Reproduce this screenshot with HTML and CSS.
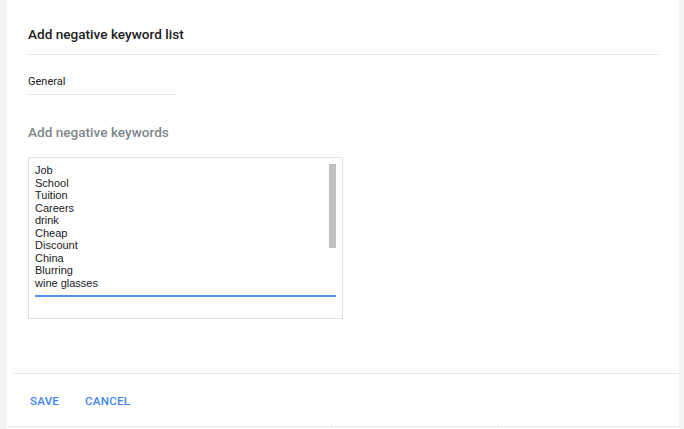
FILE: index.html
```html
<!DOCTYPE html>
<html>
<head>
<meta charset="utf-8">
<link rel="stylesheet" href="styles.css">
</head>
<body>
<div class="page">
  <div class="card">
    <div class="card-body">
      <div class="header">
        <h1 class="title">Add negative keyword list</h1>
      </div>
      <div class="name-field">General</div>
      <div class="label">Add negative keywords</div>
      <div class="textbox">
        <div class="lines">
          <div>Job</div>
          <div>School</div>
          <div>Tuition</div>
          <div>Careers</div>
          <div>drink</div>
          <div>Cheap</div>
          <div>Discount</div>
          <div>China</div>
          <div>Blurring</div>
          <div>wine glasses</div>
        </div>
        <div class="focus-line"></div>
        <div class="scroll-thumb"></div>
      </div>
    </div>
    <div class="footer">
      <button class="btn">SAVE</button>
      <button class="btn">CANCEL</button>
    </div>
  </div>
  <div class="below">
    <div class="cell"></div>
    <div class="cell"></div>
    <div class="cell"></div>
  </div>
</div>
</body>
</html>
```

FILE: styles.css
```css
html, body {
  margin: 0;
  padding: 0;
  background: #f1f3f4;
  font-family: Roboto, "Liberation Sans", Arial, sans-serif;
  color: #202124;
}

.page {
  width: 672px;
  margin-left: 7px;
  height: 429px;
  background: #ffffff;
}

.card {
  height: 426px;
  border-bottom: 1px solid #e6e8ea;
  display: flex;
  flex-direction: column;
}

.card-body {
  padding: 0 20px 0 21px;
}

.header {
  padding-top: 26px;
  height: 28px;
  border-bottom: 1px solid #e4e6e8;
}

.title {
  margin: 0;
  font-size: 13.6px;
  line-height: 17px;
  font-weight: 500;
  color: #202124;
}

.name-field {
  width: 148px;
  margin-top: 20px;
  font-size: 11px;
  line-height: 13px;
  padding-bottom: 6px;
  border-bottom: 1px solid #e4e6e8;
  color: #202124;
}

.label {
  margin-top: 29px;
  font-size: 13.6px;
  line-height: 17px;
  font-weight: 500;
  color: #80868b;
}

.textbox {
  position: relative;
  margin-top: 16px;
  width: 313px;
  height: 160px;
  border: 1px solid #dfe1e3;
  box-sizing: content-box;
}

.lines {
  padding: 6px 0 0 6px;
  font-family: "Liberation Sans", Arial, sans-serif;
  font-size: 11px;
  line-height: 12.5px;
  color: #202124;
}

.focus-line {
  margin: 6px 6px 0 6px;
  height: 2px;
  background: #5b8def;
}

.scroll-thumb {
  position: absolute;
  left: 300px;
  top: 6px;
  width: 7px;
  height: 84px;
  background: #c1c1c1;
}

.footer {
  margin-top: auto;
  margin-left: 7px;
  height: 53px;
  border-top: 1px solid #e6e8ea;
  display: flex;
  align-items: flex-start;
  gap: 26px;
  padding: 20px 0 0 16px;
  box-sizing: border-box;
}

.btn {
  border: 0;
  background: none;
  padding: 0;
  font-family: Roboto, "Liberation Sans", Arial, sans-serif;
  font-size: 11.6px;
  line-height: 14px;
  font-weight: 500;
  color: #4285f4;
  letter-spacing: 0.2px;
  cursor: pointer;
}

.below {
  display: grid;
  grid-template-columns: 324px 170px 1fr;
  height: 2px;
}

.cell + .cell {
  border-left: 1px solid #e6e8ea;
}
```
